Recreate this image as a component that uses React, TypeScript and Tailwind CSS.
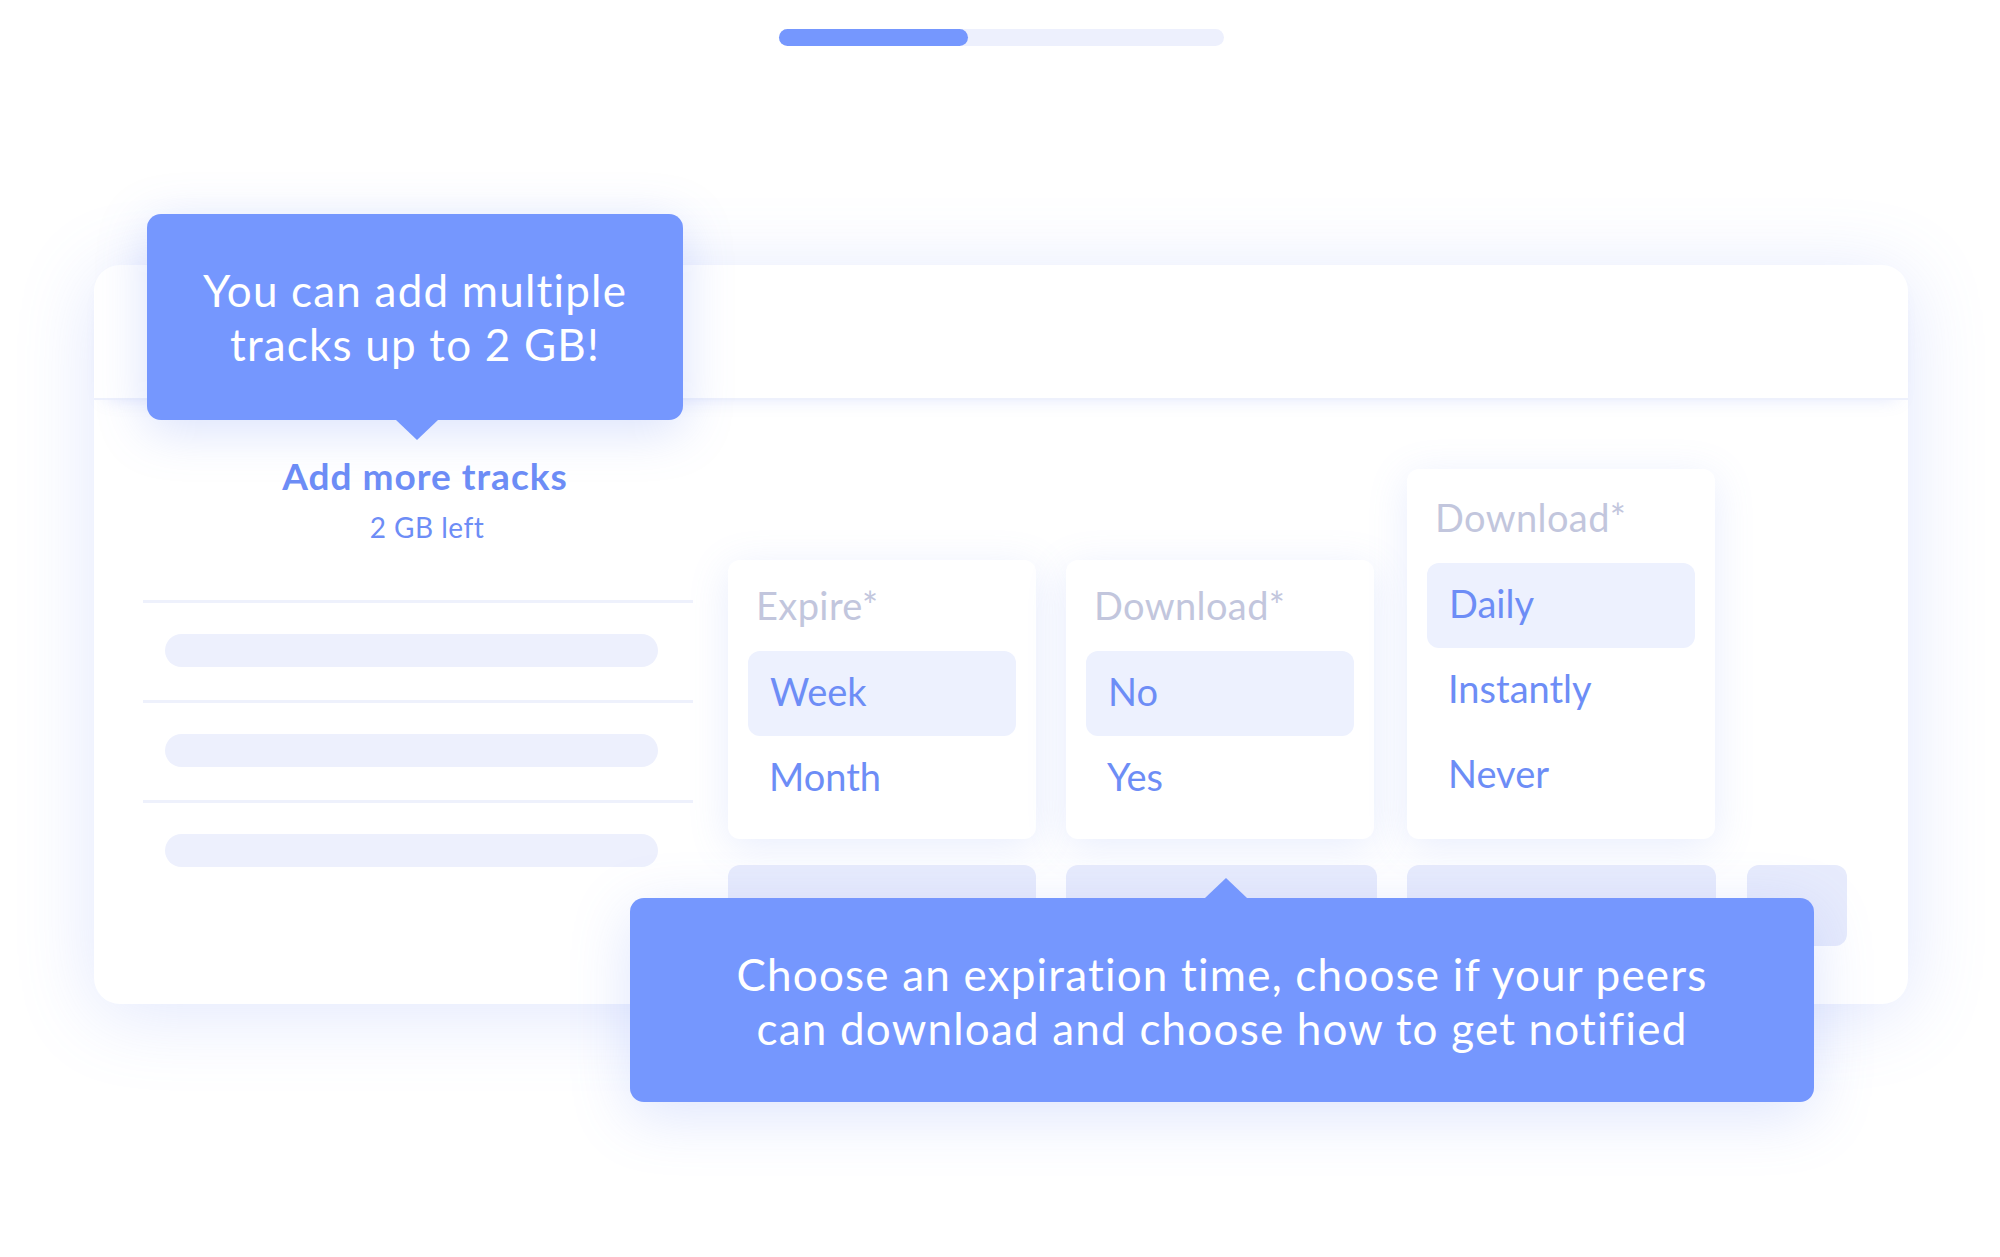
import React from "react";

const FONT = { fontFamily: "Lato, 'Open Sans', sans-serif" };

type Option = { label: string; active?: boolean };

function Dropdown({
  title,
  options,
  className,
}: {
  title: string;
  options: Option[];
  className: string;
}) {
  return (
    <div
      className={`w-[308px] rounded-[12px] bg-white px-[20px] shadow-[0_8px_40px_rgba(110,140,245,0.16)] ${className}`}
    >
      <div className="pl-[8px] text-[38px] leading-[44px] tracking-[0.4px] text-[#c2c6dd] mb-[24px]">{title}</div>
      {options.map((o) => (
        <div
          key={o.label}
          className={
            o.active
              ? "h-[85px] rounded-[12px] bg-[#edf1fe] flex items-center pl-[22px] pb-[5px] text-[38px] text-[#6d8df6]"
              : "h-[85px] flex items-center pl-[21px] pb-[5px] text-[38px] text-[#6d8df6]"
          }
        >
          {o.label}
        </div>
      ))}
    </div>
  );
}

function Tooltip({
  className,
  arrow,
  children,
}: {
  className: string;
  arrow: "up" | "down";
  children: React.ReactNode;
}) {
  return (
    <div
      className={`absolute rounded-[14px] bg-[#7597fe] text-white text-center text-[44px] leading-[54px] tracking-[1.2px] pt-[49px] ${className}`}
    >
      {arrow === "down" ? (
        <svg className="absolute left-[249px] top-full" width="42" height="20" viewBox="0 0 42 20">
          <polygon points="0,0 42,0 21,20" fill="#7597fe" />
        </svg>
      ) : (
        <svg className="absolute left-[575px] bottom-full" width="42" height="20" viewBox="0 0 42 20">
          <polygon points="0,20 42,20 21,0" fill="#7597fe" />
        </svg>
      )}
      {children}
    </div>
  );
}

export default function App() {
  const rows = [0, 1, 2];
  return (
    <div className="w-[2000px] h-[1257px] bg-white overflow-hidden" style={FONT}>
      {/* progress */}
      <div className="pt-[29px] flex justify-center">
        <div className="w-[445px] h-[17px] rounded-full bg-[#edf0fd] ml-[3px]">
          <div className="w-[189px] h-[17px] rounded-full bg-[#7597fe]" />
        </div>
      </div>

      {/* main card */}
      <div className="relative ml-[94px] mt-[219px] w-[1814px] h-[739px] rounded-[26px] bg-white shadow-[0_10px_80px_rgba(105,135,245,0.2)]">
        <div className="h-[135px] rounded-t-[26px] border-b-[2px] border-[#eef1fc] shadow-[0_10px_18px_-12px_rgba(120,145,245,0.25)]" />

        <div className="flex pl-[49px]">
          {/* left column */}
          <div className="w-[550px] flex flex-col">
            <div className="pt-[56px] flex flex-col items-center">
              <div className="text-[37px] leading-[40px] font-bold tracking-[1px] text-[#6d8df6] pl-[14px]">
                Add more tracks
              </div>
              <div className="mt-[15px] text-[28px] leading-[32px] tracking-[0.5px] text-[#6d8df6] pl-[18px]">
                2 GB left
              </div>
            </div>
            <div className="mt-[57px]">
              {rows.map((r) => (
                <div key={r}>
                  <div className="h-[3px] bg-[#eef1fc]" />
                  <div className="pt-[31px] pb-[33px] pl-[22px]">
                    <div className="w-[493px] h-[33px] rounded-full bg-[#edf0fd]" />
                  </div>
                </div>
              ))}
            </div>
          </div>

          {/* right column */}
          <div className="ml-[35px] pt-[69px] flex flex-col">
            <div className="flex items-end">
              <Dropdown
                title="Expire*"
                className="h-[279px] pt-[23px]"
                options={[{ label: "Week", active: true }, { label: "Month" }]}
              />
              <div className="ml-[30px]">
                <Dropdown
                  title="Download*"
                  className="h-[279px] pt-[23px]"
                  options={[{ label: "No", active: true }, { label: "Yes" }]}
                />
              </div>
              <div className="ml-[33px]">
                <Dropdown
                  title="Download*"
                  className="h-[370px] pt-[26px]"
                  options={[{ label: "Daily", active: true }, { label: "Instantly" }, { label: "Never" }]}
                />
              </div>
            </div>
            <div className="mt-[26px] flex">
              <div className="w-[308px] h-[80px] rounded-[12px] bg-[#e7ebfc]" />
              <div className="ml-[30px] w-[311px] h-[80px] rounded-[12px] bg-[#e7ebfc]" />
              <div className="ml-[30px] w-[309px] h-[80px] rounded-[12px] bg-[#e7ebfc]" />
              <div className="ml-[31px] w-[100px] h-[81px] rounded-[12px] bg-[#e7ebfc]" />
            </div>
          </div>
        </div>

        <Tooltip
          arrow="down"
          className="left-[53px] top-[-51px] w-[536px] h-[206px] shadow-[0_10px_50px_rgba(105,135,245,0.25)]"
        >
          You can add multiple
          <br />
          tracks up to 2 GB!
        </Tooltip>

        <Tooltip
          arrow="up"
          className="left-[536px] top-[633px] w-[1184px] h-[204px] shadow-[0_14px_60px_rgba(105,135,245,0.22)]"
        >
          Choose an expiration time, choose if your peers
          <br />
          can download and choose how to get notified
        </Tooltip>
      </div>
    </div>
  );
}
